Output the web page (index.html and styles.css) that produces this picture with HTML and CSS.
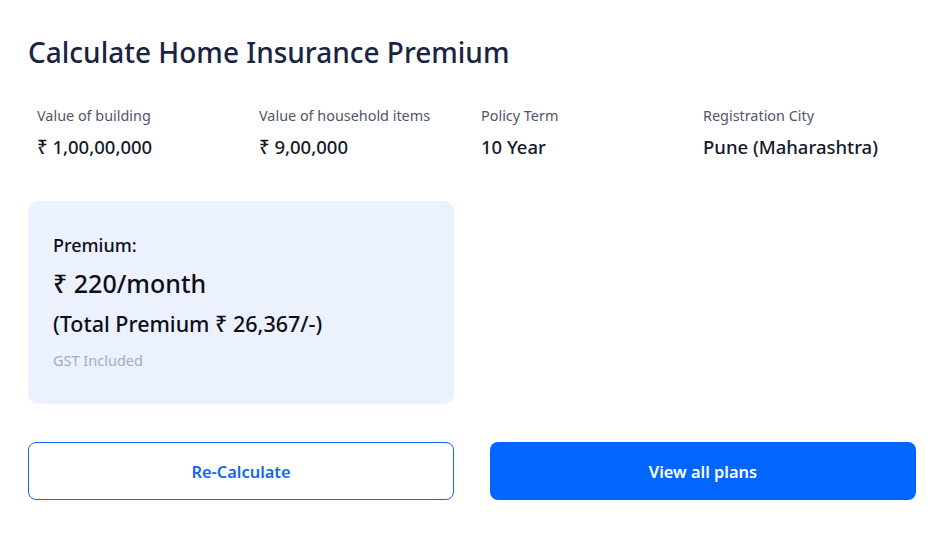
FILE: index.html
```html
<!DOCTYPE html>
<html lang="en">

<head>
  <meta charset="UTF-8">
  <meta name="viewport" content="width=device-width, initial-scale=1.0">
  <title>Home Insurance Premium</title>
  <link rel="stylesheet" href="styles.css">
</head>

<body>
  <div class="card">
    <h1 class="title">Calculate Home Insurance Premium</h1>

    <!-- Summary of inputs -->
    <div class="details">
      <div class="detail">
        <div class="label">Value of building</div>
        <div class="value">₹ 1,00,00,000</div>
      </div>
      <div class="detail">
        <div class="label">Value of household items</div>
        <div class="value">₹ 9,00,000</div>
      </div>
      <div class="detail">
        <div class="label">Policy Term</div>
        <div class="value">10 Year</div>
      </div>
      <div class="detail">
        <div class="label">Registration City</div>
        <div class="value">Pune (Maharashtra)</div>
      </div>
    </div>

    <div class="result">
      <div class="premium-box">
        <div class="premium-label">Premium:</div>
        <div class="premium-month">₹ 220/month</div>
        <div class="premium-total">(Total Premium ₹ 26,367/-)</div>
        <div class="premium-note">GST Included</div>
      </div>
    </div>

    <div class="buttons">
      <button class="button button-outline">Re-Calculate</button>
      <button class="button button-primary">View all plans</button>
    </div>
  </div>
</body>

</html>
```

FILE: styles.css
```css
body,
html {
  margin: 0;
  padding: 0;
  background-color: #ffffff;
  font-family: "Noto Sans", "Open Sans", sans-serif;
}

.card {
  width: 888px;
  padding: 28px 28px 0 28px;
}

.title {
  margin: 0;
  font-size: 28px;
  font-weight: 500;
  line-height: 48px;
  color: #1a2442;
}

.details {
  display: grid;
  grid-template-columns: repeat(4, 1fr);
  margin-top: 30px;
}

.detail {
  padding-left: 9px;
}

.label {
  font-size: 14.4px;
  line-height: 20px;
  color: #4f5668;
}

.value {
  margin-top: 8px;
  font-size: 18.5px;
  font-weight: 500;
  line-height: 26px;
  color: #131a2c;
}

.result {
  display: grid;
  grid-template-columns: 1fr 1fr;
  gap: 36px;
  margin-top: 41px;
}

.premium-box {
  background-color: #ebf1fd;
  border-radius: 10px;
  padding: 31px 25px 34px 25px;
  color: #0c0f18;
}

.premium-label {
  font-size: 18px;
  font-weight: 500;
  line-height: 26px;
}

.premium-month {
  margin-top: 9px;
  font-size: 25px;
  font-weight: 500;
  line-height: 32px;
}

.premium-total {
  margin-top: 10px;
  font-size: 21.5px;
  font-weight: 500;
  line-height: 30px;
}

.premium-note {
  margin-top: 11px;
  font-size: 14.5px;
  line-height: 20px;
  color: #a6adbb;
}

.buttons {
  display: grid;
  grid-template-columns: 1fr 1fr;
  gap: 36px;
  margin-top: 38px;
}

.button {
  height: 58px;
  border-radius: 8px;
  font-family: inherit;
  font-size: 16.4px;
  font-weight: 600;
  cursor: pointer;
}

.button-outline {
  background-color: #ffffff;
  border: 1px solid #1467ee;
  color: #1467ee;
}

.button-primary {
  background-color: #0066ff;
  border: none;
  color: #ffffff;
}
```
